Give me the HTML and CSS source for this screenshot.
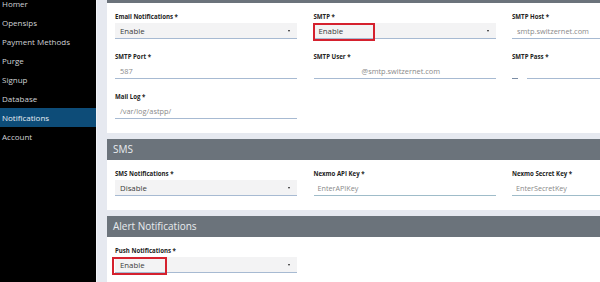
FILE: index.html
```html
<!DOCTYPE html>
<html>
<head>
<meta charset="utf-8">
<link rel="stylesheet" href="styles.css">
</head>
<body>
<div class="app">
  <nav class="sidebar">
    <ul class="menu">
      <li class="item">Homer</li>
      <li class="item">Opensips</li>
      <li class="item">Payment Methods</li>
      <li class="item">Purge</li>
      <li class="item">Signup</li>
      <li class="item">Database</li>
      <li class="item active">Notifications</li>
      <li class="item">Account</li>
    </ul>
  </nav>
  <main class="content">
    <section class="card first">
      <header class="card-head" aria-label="Email"></header>
      <div class="card-body grid">
        <div class="field">
          <label class="label">Email Notifications *</label>
          <div class="control select"><span class="val">Enable</span><span class="caret"></span></div>
        </div>
        <div class="field">
          <label class="label">SMTP *</label>
          <div class="control select"><span class="val">Enable</span><span class="caret"></span><span class="mark mark-smtp"></span></div>
        </div>
        <div class="field">
          <label class="label">SMTP Host *</label>
          <div class="control input"><span class="ph">smtp.switzernet.com</span></div>
        </div>
        <div class="field">
          <label class="label">SMTP Port *</label>
          <div class="control input"><span class="ph">587</span></div>
        </div>
        <div class="field">
          <label class="label">SMTP User *</label>
          <div class="control input"><span class="ph user">@smtp.switzernet.com</span></div>
        </div>
        <div class="field">
          <label class="label">SMTP Pass *</label>
          <div class="control input pass"></div>
        </div>
        <div class="field">
          <label class="label">Mail Log *</label>
          <div class="control input"><span class="ph">/var/log/astpp/</span></div>
        </div>
      </div>
    </section>
    <section class="card">
      <header class="card-head">SMS</header>
      <div class="card-body grid">
        <div class="field">
          <label class="label">SMS Notifications *</label>
          <div class="control select"><span class="val">Disable</span><span class="caret"></span></div>
        </div>
        <div class="field">
          <label class="label">Nexmo API Key *</label>
          <div class="control input teal"><span class="ph">EnterAPIKey</span></div>
        </div>
        <div class="field">
          <label class="label">Nexmo Secret Key *</label>
          <div class="control input teal"><span class="ph">EnterSecretKey</span></div>
        </div>
      </div>
    </section>
    <section class="card">
      <header class="card-head">Alert Notifications</header>
      <div class="card-body grid">
        <div class="field">
          <label class="label">Push Notifications *</label>
          <div class="control select"><span class="val">Enable</span><span class="caret"></span><span class="mark mark-push"></span></div>
        </div>
      </div>
    </section>
  </main>
</div>
</body>
</html>
```
FILE: styles.css
```css
* { box-sizing: border-box; }
html, body { margin: 0; padding: 0; }
body {
  width: 600px;
  height: 282px;
  overflow: hidden;
  font-family: "Open Sans", "DejaVu Sans", sans-serif;
  background: #e6e9f0;
}
.app {
  display: flex;
  height: 282px;
}
.sidebar {
  width: 96px;
  flex: none;
  background: #000;
  overflow: hidden;
}
.menu {
  list-style: none;
  margin: -6px 0 0 0;
  padding: 0;
}
.item {
  height: 19px;
  line-height: 19px;
  padding-left: 2px;
  font-size: 8px;
  color: #cfd2d6;
  white-space: nowrap;
}
.item.active {
  background: #0d4c78;
  color: #e8eef4;
}
.content {
  flex: 1;
  padding-left: 10px;
  overflow: hidden;
  border-left: 1px solid #f2f4f8;
}
.card {
  background: #fff;
  margin-bottom: 6px;
  overflow: hidden;
}
.card.first {
  margin-top: -18px;
}
.card-head {
  height: 21px;
  line-height: 21px;
  background: #6b737b;
  color: #e9ecef;
  font-size: 10px;
  padding-left: 6px;
}
.card-body {
  padding: 9px 0 14px 8px;
}
.grid {
  display: grid;
  grid-template-columns: repeat(3, 182px);
  column-gap: 16.5px;
  row-gap: 13px;
}
.field {
  display: flex;
  flex-direction: column;
}
.label {
  font-size: 6.1px;
  font-weight: bold;
  color: #222;
  line-height: 9px;
  height: 10px;
  margin-bottom: 1px;
  white-space: nowrap;
}
.control {
  position: relative;
  height: 16px;
  border-bottom: 1px solid #a7bad2;
  font-size: 7.8px;
  line-height: 16px;
  padding-left: 5px;
  white-space: nowrap;
}
.select {
  background: #f3f3f4;
  color: #3a3a3a;
}
.caret {
  position: absolute;
  right: 7px;
  top: 7px;
  width: 0;
  height: 0;
  border-left: 1.5px solid transparent;
  border-right: 1.5px solid transparent;
  border-top: 2px solid #222;
}
.input {
  color: #8a8a8a;
  padding-left: 5px;
  font-size: 7.4px;
}
.input.teal {
  border-bottom-color: #9fbcc9;
  padding-left: 4px;
  font-size: 7.2px;
}
.ph.user {
  padding-left: 43px;
}
.input.pass {
  border-bottom: none;
  background: linear-gradient(to right, #7b8da5 0, #7b8da5 6px, transparent 6px, transparent 15px, #a7bad2 15px) bottom / 100% 1px no-repeat;
}
.mark {
  position: absolute;
  border: 2px solid #d5212e;
  top: 0;
  height: 18px;
  left: -1px;
}
.mark-smtp { width: 62px; }
.mark-push { width: 55px; left: -3px; }
```
